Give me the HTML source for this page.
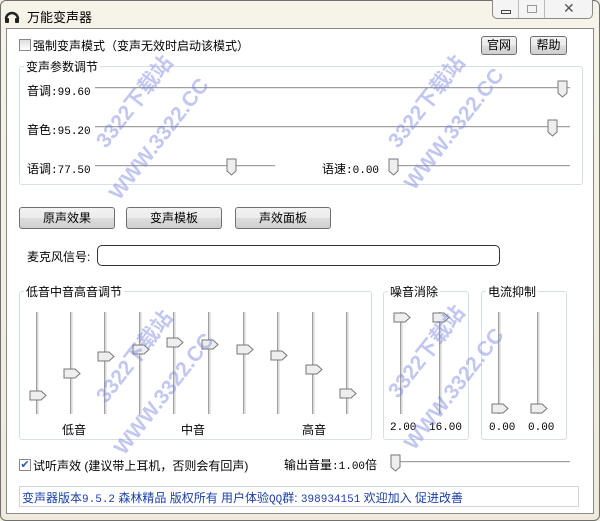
<!DOCTYPE html>
<html><head><meta charset="utf-8"><style>
*{margin:0;padding:0;box-sizing:border-box}
body{width:600px;height:521px;overflow:hidden;background:#f3efe0;font-family:"Liberation Sans","Noto Sans CJK SC",sans-serif;font-size:12px;color:#000;position:relative}
.a{position:absolute;white-space:nowrap}
.frame{position:absolute;left:0;top:0;width:600px;height:521px;border:1px solid #707070;border-radius:6px;background:linear-gradient(#f6f3e8,#efeadb)}
.client{position:absolute;left:6px;top:28px;width:588px;height:486px;background:#fff;border:1px solid #8a8a8a}
.grp{position:absolute;border:1px solid #d5dfe5;border-radius:3px}
.gt{position:absolute;background:#fff;padding:0 2px;font-size:12px}
.btn{position:absolute;border:1px solid #707070;border-radius:3px;background:linear-gradient(#f2f2f2,#ebebeb 50%,#dddddd 51%,#cfcfcf);text-align:center;line-height:20px;font-size:12px}
.ht{position:absolute;height:2px;border-top:1px solid #a0a0a0;border-bottom:1px solid #e8e8e8}
.vt{position:absolute;width:3px;border-left:1px solid #a0a0a0;border-right:1px solid #e8e8e8;background:#d8d8d8}
.mono{font-family:"Liberation Mono","DejaVu Sans Mono",monospace;font-size:11px}
.wm{position:absolute;color:rgba(120,130,220,.45);font-weight:bold;font-size:21px;transform:rotate(-52deg);transform-origin:left top;font-family:"Liberation Sans","Noto Sans CJK SC",sans-serif}
</style></head><body>
<div class="frame"></div>
<svg class="a" style="left:4px;top:8px" width="16" height="16" viewBox="0 0 16 16"><path d="M2 11 A6 6 0 0 1 14 11" fill="none" stroke="#222" stroke-width="2.5"/><rect x="1" y="10" width="4" height="5" rx="1" fill="#222"/><rect x="11" y="10" width="4" height="5" rx="1" fill="#222"/></svg>
<div class="a" style="left:27px;top:7px;font-size:13px">万能变声器</div>
<div class="a" style="left:492px;top:0;width:101px;height:19px;border:1px solid #8a8a8a;border-top:none;border-radius:0 0 5px 5px;background:#f4f4f4"></div>
<div class="a" style="left:493px;top:0;width:26px;height:18px;border-right:1px solid #bbb"></div>
<div class="a" style="left:519px;top:0;width:26px;height:18px;border-right:1px solid #bbb"></div>
<div class="a" style="left:501px;top:10px;width:10px;height:4px;border:1px solid #444"></div>
<div class="a" style="left:527px;top:5px;width:10px;height:8px;border:1px solid #999"></div>
<div class="a" style="left:563px;top:0px;font-size:14px;color:#555">✕</div>
<div class="client"></div>
<div class="a" style="left:19px;top:39px;width:12px;height:12px;border:1px solid #888;background:linear-gradient(#ddd,#fff)"></div>
<div class="a" style="left:33px;top:37px">强制变声模式（变声无效时启动该模式）</div>
<div class="btn" style="left:481px;top:36px;width:36px;height:19px;line-height:17px">官网</div>
<div class="btn" style="left:530px;top:36px;width:37px;height:19px;line-height:17px">帮助</div>

<div class="grp" style="left:19px;top:66px;width:564px;height:119px"></div>
<div class="gt" style="left:24px;top:58px">变声参数调节</div>
<div class="a" style="left:27px;top:82px">音调<span class="mono">:99.60</span></div>
<div class="ht" style="left:95px;top:87px;width:475px"></div>
<svg class="a" style="left:557px;top:80px" width="11" height="18"><path d="M1 1H10V13L5.5 17L1 13Z" fill="#eee" stroke="#777"/></svg>
<div class="a" style="left:27px;top:121px">音色<span class="mono">:95.20</span></div>
<div class="ht" style="left:95px;top:126px;width:475px"></div>
<svg class="a" style="left:547px;top:119px" width="11" height="18"><path d="M1 1H10V13L5.5 17L1 13Z" fill="#eee" stroke="#777"/></svg>
<div class="a" style="left:27px;top:160px">语调<span class="mono">:77.50</span></div>
<div class="ht" style="left:95px;top:165px;width:180px"></div>
<svg class="a" style="left:226px;top:158px" width="11" height="18"><path d="M1 1H10V13L5.5 17L1 13Z" fill="#eee" stroke="#777"/></svg>
<div class="a" style="left:322px;top:160px">语速<span class="mono">:0.00</span></div>
<div class="ht" style="left:390px;top:165px;width:180px"></div>
<svg class="a" style="left:388px;top:158px" width="11" height="18"><path d="M1 1H10V13L5.5 17L1 13Z" fill="#eee" stroke="#777"/></svg>

<div class="btn" style="left:19px;top:207px;width:96px;height:22px">原声效果</div>
<div class="btn" style="left:126px;top:207px;width:96px;height:22px">变声模板</div>
<div class="btn" style="left:235px;top:207px;width:96px;height:22px">声效面板</div>

<div class="a" style="left:27px;top:248px">麦克风信号:</div>
<div class="a" style="left:97px;top:245px;width:403px;height:21px;border:1px solid #333;border-radius:5px"></div>

<div class="grp" style="left:19px;top:291px;width:353px;height:149px"></div>
<div class="gt" style="left:24px;top:283px">低音中音高音调节</div>
<div class="grp" style="left:383px;top:291px;width:86px;height:149px"></div>
<div class="gt" style="left:388px;top:283px">噪音消除</div>
<div class="grp" style="left:481px;top:291px;width:86px;height:149px"></div>
<div class="gt" style="left:486px;top:283px">电流抑制</div>

<div id="vs"></div>
<div class="a" style="left:62px;top:421px">低音</div>
<div class="a" style="left:181px;top:421px">中音</div>
<div class="a" style="left:302px;top:421px">高音</div>
<div class="a mono" style="left:390px;top:422px">2.00</div>
<div class="a mono" style="left:429px;top:422px">16.00</div>
<div class="a mono" style="left:489px;top:422px">0.00</div>
<div class="a mono" style="left:528px;top:422px">0.00</div>

<div class="a" style="left:19px;top:459px;width:12px;height:12px;border:1px solid #888;background:#fff;color:#2a5bb0;font-size:11px;line-height:10px;text-align:center">✔</div>
<div class="a" style="left:33px;top:457px">试听声效 (建议带上耳机，否则会有回声)</div>
<div class="a" style="left:284px;top:456px">输出音量<span class="mono">:1.00</span>倍</div>
<div class="ht" style="left:395px;top:461px;width:175px"></div>
<svg class="a" style="left:390px;top:454px" width="11" height="18"><path d="M1 1H10V13L5.5 17L1 13Z" fill="#eee" stroke="#777"/></svg>

<div class="a" style="left:19px;top:486px;width:560px;height:21px;border:1px solid #cfd6e0;background:#fff"></div>
<div class="a" style="left:22px;top:489px;color:#1a3fa8;font-size:12px">变声器版本<span class="mono">9.5.2</span> 森林精品 版权所有 用户体验<span class="mono">QQ</span>群: <span class="mono">398934151</span> 欢迎加入 促进改善</div>

<div class="wm" style="left:88px;top:135px">3322下载站</div>
<div class="wm" style="left:105px;top:190px">WWW.3322.CC</div>
<div class="wm" style="left:380px;top:135px">3322下载站</div>
<div class="wm" style="left:400px;top:180px">WWW.3322.CC</div>
<div class="wm" style="left:88px;top:390px">3322下载站</div>
<div class="wm" style="left:110px;top:445px">WWW.3322.CC</div>
<div class="wm" style="left:380px;top:385px">3322下载站</div>
<div class="wm" style="left:400px;top:440px">WWW.3322.CC</div>

<script>
var xs=[37,71,105,140,174,209,244,278,313,347,401,440,499,538];
var ys=[395,373,356,349,342,344,349,355,369,393,317,317,408,408];
var h='';
for(var i=0;i<xs.length;i++){
h+='<div class="vt" style="left:'+(xs[i]-1)+'px;top:312px;height:102px"></div>';
h+='<svg class="a" style="left:'+(xs[i]-8)+'px;top:'+(ys[i]-5)+'px" width="18" height="11"><path d="M1 1H12L17 5.5L12 10H1Z" fill="#eee" stroke="#777"/></svg>';
}
document.getElementById('vs').innerHTML=h;
</script>
</body></html>
